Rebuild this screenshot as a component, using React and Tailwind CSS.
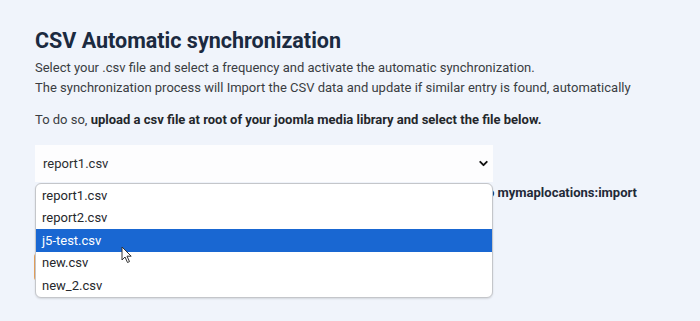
import React from 'react';

const files = ['report1.csv', 'report2.csv', 'j5-test.csv', 'new.csv', 'new_2.csv'];

function Cursor() {
  return (
    <svg width="12" height="18" viewBox="0 0 12 18" className="absolute left-[85px] top-[62px]">
      <path d="M1 1 L1 14 L4 11 L6.5 16.5 L8.5 15.6 L6 10.2 L10.2 10.2 Z" fill="#fff" stroke="#333" strokeWidth="1" strokeLinejoin="round" />
    </svg>
  );
}

export default function App() {
  return (
    <div className="w-[700px] h-[321px] bg-[#f0f4fb] overflow-hidden font-['Roboto',sans-serif]">
      <div className="pl-[35px] pt-[26px]">
        <h1 className="text-[21.5px] leading-[30px] font-bold text-[#1b2a40]">CSV Automatic synchronization</h1>
        <p className="mt-[2px] text-[13px] leading-[20px] text-[#3a3d42]">
          Select your .csv file and select a frequency and activate the automatic synchronization.
          <br />
          The synchronization process will Import the CSV data and update if similar entry is found, automatically
        </p>
        <p className="mt-[12px] text-[13px] leading-[20px] text-[#3a3d42]">
          To do so, <span className="font-bold text-[#24272b]">upload a csv file at root of your joomla media library and select the file below.</span>
        </p>

        <div className="relative mt-[15px] w-[458px]">
          <div className="h-[37px] bg-[#fdfdfe] flex items-center justify-between pl-[8px] pr-[3px] text-[13px] text-[#2b2d31]">
            <span>report1.csv</span>
            <svg width="13" height="13" viewBox="0 0 24 24" fill="none" stroke="#111" strokeWidth="3.5" strokeLinecap="round" strokeLinejoin="round">
              <path d="M6 9l6 6 6-6" />
            </svg>
          </div>

          <div className="flex items-center justify-end w-[602px] h-[20px] mt-[1px] text-[13px] font-bold text-[#1f2a38]">
            <span className="whitespace-nowrap">Then add a CRON task that runs the CLI command linked to mymaplocations:import</span>
          </div>
          <div className="mt-[50px] -ml-[1px] w-[120px] h-[28px] bg-[#e8a25b] rounded-[4px]" />

          <div className="absolute left-0 top-[38px] w-[458px] bg-white border border-[#c4c6ca] rounded-[6px] shadow-[0_1px_2px_rgba(0,0,0,0.12)] overflow-hidden text-[13px] text-[#26282c]">
            {files.map((f, i) => (
              <div
                key={f}
                className={
                  i === 2
                    ? 'h-[22.6px] flex items-center pl-[6px] bg-[#1967d2] text-white'
                    : 'h-[22.6px] flex items-center pl-[6px]'
                }
              >
                {f}
              </div>
            ))}
            <Cursor />
          </div>
        </div>
      </div>
    </div>
  );
}
